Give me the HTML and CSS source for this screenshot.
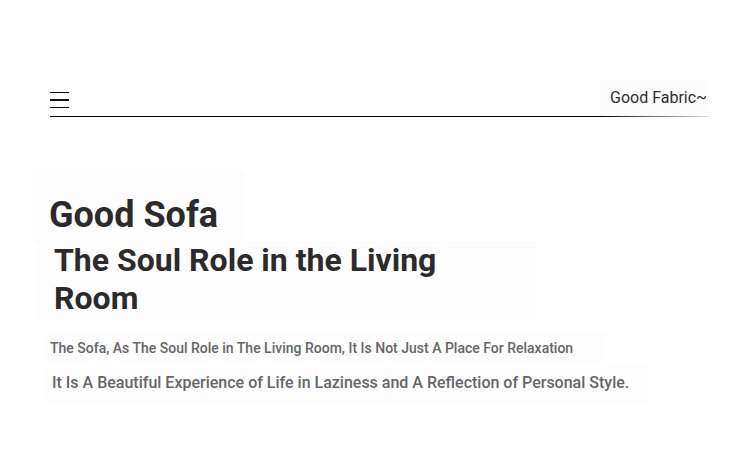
FILE: index.html
```html
<!DOCTYPE html>
<html lang="en">

<head>
    <meta charset="UTF-8">
    <title>Good Sofa</title>
    <link rel="stylesheet" href="styles.css">
</head>

<body>
    <div class="page">
        <header class="top">
            <div class="menu">
                <span></span>
                <span></span>
                <span></span>
            </div>
            <div class="brand">Good Fabric~</div>
        </header>

        <section class="intro">
            <h1 class="title">Good Sofa</h1>
            <h2 class="subtitle">The Soul Role in the Living Room</h2>
            <p class="lead">The Sofa, As The Soul Role in The Living Room, It Is Not Just A Place For Relaxation</p>
            <p class="text">It Is A Beautiful Experience of Life in Laziness and A Reflection of Personal Style.</p>
        </section>
    </div>
</body>

</html>
```

FILE: styles.css
```css
body {
    font-family: Roboto, "Liberation Sans", Arial, sans-serif;
    background-color: #fff;
    color: #2b2b2b;
    margin: 0;
    padding: 0;
}

.page {
    padding: 86px 41px 0 50px;
}

.top {
    display: flex;
    justify-content: space-between;
    align-items: flex-end;
    height: 30px;
    border-bottom: 1px solid;
    border-image: linear-gradient(to right, #000 83%, #ddd 100%) 1;
}

.menu {
    display: flex;
    flex-direction: column;
    gap: 6px;
    width: 19px;
    padding-bottom: 8px;
}

.menu span {
    display: block;
    height: 1.5px;
    background: #111;
}

.brand {
    font-size: 16px;
    color: #2e2e2e;
    background: #fcfcfc;
    padding: 8px 2px 9px 10px;
}

.intro {
    padding-top: 53px;
}

/* faint panels behind each line of text */
.title,
.subtitle,
.lead,
.text {
    width: fit-content;
    background: #fdfdfd;
}

.title {
    font-size: 36px;
    font-weight: 700;
    line-height: 44px;
    margin: 0 0 0 -17px;
    padding: 23px 26px 8px 16px;
}

.subtitle {
    box-sizing: border-box;
    width: 500px;
    font-size: 32px;
    font-weight: 700;
    line-height: 38px;
    margin: -4px 0 0 -14px;
    padding: 0 52px 3px 18px;
}

.lead {
    font-size: 14px;
    font-weight: 500;
    color: #666;
    margin: 13px 0 0 -5px;
    padding: 5px 32px 5px 5px;
    line-height: 20px;
}

.text {
    font-size: 16px;
    font-weight: 500;
    color: #666;
    margin: 4px 0 0 -5px;
    padding: 5px 20px 7px 7px;
    line-height: 22px;
}
```
